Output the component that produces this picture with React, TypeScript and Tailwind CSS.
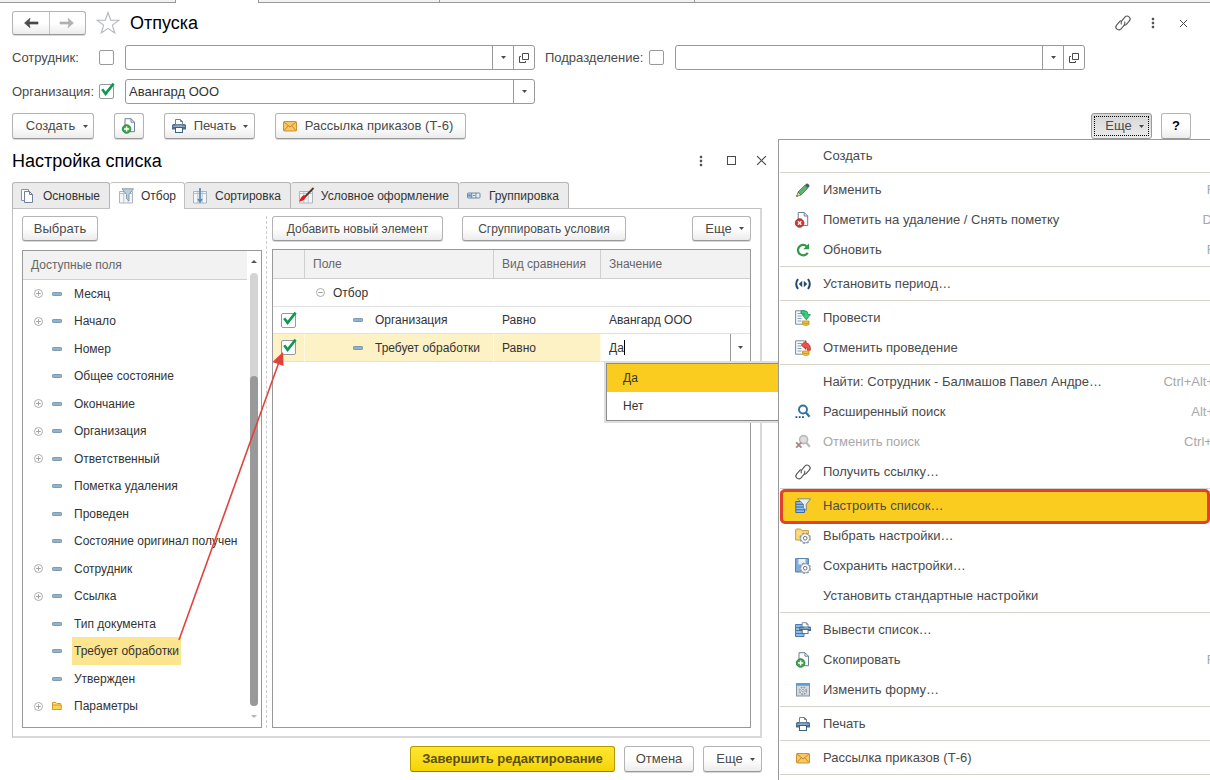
import React from "react";

type IconProps = { className?: string };
type IconComponent = (props: IconProps) => React.ReactElement;

const icon16 = "block h-4 w-4 shrink-0 overflow-visible";

/* ---------- icons ---------- */

const ArrowLeft = () => (
  <svg className="block h-3 w-4" viewBox="0 0 16 12">
    <path d="M1.5 6 L7 1.2 L6.2 4.9 H15 V7.1 H6.2 L7 10.8 Z" fill="#4a4a4a" stroke="#4a4a4a" strokeWidth=".6" />
  </svg>
);

const ArrowRight = () => (
  <svg className="block h-3 w-4" viewBox="0 0 16 12">
    <path d="M14.5 6 L9 1.2 L9.8 4.9 H1 V7.1 H9.8 L9 10.8 Z" fill="#b0b0b0" stroke="#b0b0b0" strokeWidth=".6" />
  </svg>
);

const Star = () => (
  <svg className="block h-6 w-6" viewBox="0 0 24 24">
    <path
      d="M12 1.5 L14.7 9.2 H22.8 L16.4 14.1 L18.7 22 L12 17.3 L5.3 22 L7.6 14.1 L1.2 9.2 H9.3 Z"
      fill="#fff"
      stroke="#b3b6bb"
      strokeWidth="1.1"
    />
  </svg>
);

const SmallCaret = () => (
  <svg className="block h-[3px] w-[5px] shrink-0" viewBox="0 0 5 3">
    <path d="M0 0 H5 L2.5 3 Z" fill="#4a4a4a" />
  </svg>
);

const OpenIcon = () => (
  <svg className="block h-[10px] w-[10px]" viewBox="0 0 10 10" fill="none" stroke="#4a4a4a">
    <path d="M3.5 .5 H9.5 V6.5 H3.5 Z" />
    <path d="M2 3.5 H.5 V9.5 H6.5 V8" />
  </svg>
);

const LinkIcon: IconComponent = () => (
  <svg className={icon16} viewBox="0 0 16 16" fill="none" stroke="#555" strokeWidth="1.1" strokeLinecap="round">
    <path d="M6.2 9 Q5.8 7 7 5.6 L9.9 2.2 A2.9 2.9 0 0 1 14.4 5.9 L11.4 9.4 Q10.6 10.2 9.6 10.3" />
    <path d="M9.8 7 Q10.2 9 9 10.4 L6.1 13.8 A2.9 2.9 0 0 1 1.6 10.1 L4.6 6.6 Q5.2 6 5.9 5.8" />
  </svg>
);

const DotsIcon = () => (
  <svg className="block h-3 w-1" viewBox="0 0 4 12" fill="#555">
    <rect x=".8" y=".8" width="2.4" height="2.4" rx=".6" />
    <rect x=".8" y="4.8" width="2.4" height="2.4" rx=".6" />
    <rect x=".8" y="8.8" width="2.4" height="2.4" rx=".6" />
  </svg>
);

const CrossIcon = ({ className }: IconProps) => (
  <svg className={className} viewBox="0 0 10 10" stroke="#4a4a4a" strokeWidth="1.1">
    <path d="M1 1 L9 9 M9 1 L1 9" />
  </svg>
);

const SheetShape = () => (
  <path d="M4.5 1.5 H10.5 L14 5 V14.5 H4.5 Z M10.5 1.5 V5 H14" fill="#fbfdff" stroke="#6d8196" strokeLinejoin="round" />
);

const CopyPlusIcon: IconComponent = () => (
  <svg className={icon16} viewBox="0 0 16 16">
    <g transform="translate(-.5 -.8)">
      <SheetShape />
    </g>
    <circle cx="5.6" cy="11" r="4.3" fill="#3ba54a" stroke="#1f7d30" strokeWidth=".8" />
    <path d="M5.6 8.4 V13.6 M3 11 H8.2" stroke="#fff" strokeWidth="1.5" />
  </svg>
);

const DeleteMarkIcon: IconComponent = () => (
  <svg className={icon16} viewBox="0 0 16 16">
    <g transform="translate(-1.3 -1)">
      <SheetShape />
    </g>
    <circle cx="4.6" cy="11" r="4.3" fill="#d3322f" stroke="#9d1f1f" strokeWidth=".8" />
    <path d="M2.9 9.3 L6.3 12.7 M6.3 9.3 L2.9 12.7" stroke="#fff" strokeWidth="1.4" />
  </svg>
);

const PrinterShape = () => (
  <g>
    <path d="M4.5 6.5 V1.5 H9.5 L11.5 3.5 V6.5 Z" fill="#fff" stroke="#6d8194" />
    <path d="M9.5 1.5 V3.5 H11.5" fill="none" stroke="#6d8194" />
    <path d="M2.6 6 H4.5 V7.2 H11.5 V6 H13.4 Q15 6 15 7.6 V11.4 H1 V7.6 Q1 6 2.6 6 Z" fill="#4a6f95" />
    <path d="M2.2 8.3 H13.8" stroke="#a9c2d8" strokeWidth=".9" />
    <rect x="4.5" y="9.5" width="7" height="5" fill="#fff" stroke="#3f5f7e" />
  </g>
);

const PrinterIcon: IconComponent = () => (
  <svg className={icon16} viewBox="0 0 16 16">
    <PrinterShape />
  </svg>
);

const PrintListIcon: IconComponent = () => (
  <svg className={icon16} viewBox="0 0 16 16">
    <path d="M.5 2.5 H9 V14.5 H.5 Z" fill="#8fbbe6" stroke="#4c7bab" />
    <path d="M1 5.5 H9 M1 8.5 H9 M1 11.5 H9" stroke="#4c7bab" />
    <g transform="translate(3.4 -.6) scale(.84)">
      <PrinterShape />
    </g>
  </svg>
);

const MailIcon: IconComponent = () => (
  <svg className={icon16} viewBox="0 0 16 16">
    <rect x="1.5" y="3.5" width="13" height="9.5" rx=".8" fill="#f6c866" stroke="#cf8f2e" />
    <path d="M2 4 L8 9 L14 4 M2 12.6 L6.3 7.7 M14 12.6 L9.7 7.7" fill="none" stroke="#c9872a" />
  </svg>
);

const PencilIcon: IconComponent = () => (
  <svg className={icon16} viewBox="0 0 16 16">
    <path d="M1.6 14.4 L3 10 L6 13 Z" fill="#f1cf95" stroke="#8c7343" strokeWidth=".8" />
    <path d="M3 10 L9.6 3.4 L12.6 6.4 L6 13 Z" fill="#5cb56a" stroke="#37804a" strokeWidth=".8" />
    <path d="M9.8 3.2 L11.5 1.6 Q12.3 1.2 13.2 2 L14.2 3 Q14.7 3.8 14.3 4.5 L12.8 6.2 Z" fill="#4d5963" />
    <path d="M1.3 14.7 L1.8 13 L3 14.2 Z" fill="#444" />
  </svg>
);

const RefreshIcon: IconComponent = () => (
  <svg className={icon16} viewBox="0 0 16 16">
    <path d="M12.7 10.7 A5.2 5.2 0 1 1 11.6 4.2" fill="none" stroke="#35984c" strokeWidth="2.2" />
    <path d="M14 1.4 V7.2 H8.2 Z" fill="#35984c" />
  </svg>
);

const PeriodIcon: IconComponent = () => (
  <svg className={icon16} viewBox="0 0 16 16">
    <path d="M3 3 Q-.6 8 3 13 M13 3 Q16.6 8 13 13" fill="none" stroke="#1f4c70" strokeWidth="2" />
    <path d="M7.2 4.8 V11.2 L3.8 8 Z M8.8 4.8 V11.2 L12.2 8 Z" fill="#1f4c70" />
  </svg>
);

const LedgerShape = () => (
  <g>
    <path d="M9.5 .8 H.6 V14.2 H7" fill="#f6f9fc" stroke="#788ba0" />
    <path d="M2.5 3.5 H7 M2.5 6 H6.5 M2.5 8.5 H6.5 M2.5 11 H6.5" stroke="#8d9cad" />
    <path d="M7.6 11 H14 V14.6 Q10.8 16.4 7.6 14.6 Z" fill="#f3c844" stroke="#bd8a1b" strokeWidth=".8" />
    <path d="M7.6 12.8 Q10.8 14.4 14 12.8" fill="none" stroke="#bd8a1b" strokeWidth=".8" />
  </g>
);

const PostIcon: IconComponent = () => (
  <svg className={icon16} viewBox="0 0 16 16">
    <LedgerShape />
    <path d="M6 .8 H10 Q12.9 .8 12.9 4.6 H15.4 L11.3 9.8 L7.2 4.6 H9.7 Q9.7 3.4 8.5 3.4 H6 Z" fill="#3bd07a" stroke="#12934a" strokeWidth=".8" />
  </svg>
);

const UnpostIcon: IconComponent = () => (
  <svg className={icon16} viewBox="0 0 16 16">
    <LedgerShape />
    <path d="M6.3 5 L11 .6 V3 Q15.6 3.2 15.4 10.2 H12.4 Q12.9 7.2 11 7 V9.4 Z" fill="#ee5148" stroke="#b52622" strokeWidth=".8" />
  </svg>
);

const SearchIcon: IconComponent = () => (
  <svg className={icon16} viewBox="0 0 16 16">
    <circle cx="8" cy="5.5" r="4" fill="none" stroke="#2f74a0" strokeWidth="1.9" />
    <path d="M10.8 8.6 L14.6 12.8" stroke="#2f74a0" strokeWidth="2.2" />
    <path d="M.5 12.2 H2.3 V14 H.5 Z M3.8 12.2 H5.6 V14 H3.8 Z M7.1 12.2 H8.9 V14 H7.1 Z" fill="#24516f" />
  </svg>
);

const CancelSearchIcon: IconComponent = () => (
  <svg className={icon16} viewBox="0 0 16 16">
    <circle cx="8.6" cy="5.6" r="4" fill="#dedede" stroke="#b9b9b9" strokeWidth="1.6" />
    <path d="M11.4 8.8 L14.8 12.8" stroke="#b9b9b9" strokeWidth="2.2" />
    <path d="M1.2 8.4 L6.4 13.6 M6.4 8.4 L1.2 13.6" stroke="#a98989" strokeWidth="2" />
  </svg>
);

const FilterListIcon: IconComponent = () => (
  <svg className={icon16} viewBox="0 0 16 16">
    <path d="M.8 3.5 H9.5 V14.5 H.8 Z" fill="#8cbdee" stroke="#3b6a9d" />
    <path d="M1 6.3 H9 M1 9 H9.4 M1 11.8 H9.4" stroke="#3b6a9d" />
    <path d="M2.5 .8 H15.5 L11.3 6.2 V12.4 L8.4 10 V6.2 L4.6 2.6 Z" fill="#e9edf1" stroke="#6c7f92" strokeWidth=".9" />
  </svg>
);

const GearShape = () => (
  <g>
    <circle cx="10.2" cy="10.2" r="5" fill="#f2f4f6" stroke="#8793a0" strokeWidth="1.5" strokeDasharray="2.3 1.63" />
    <circle cx="10.2" cy="10.2" r="4.5" fill="#f4f6f8" stroke="#8793a0" strokeWidth=".8" />
    <circle cx="10.2" cy="10.2" r="1.8" fill="#fff" stroke="#5d6975" strokeWidth=".9" />
  </g>
);

const FolderGearIcon: IconComponent = () => (
  <svg className={icon16} viewBox="0 0 16 16">
    <path d="M.6 12 V2 Q.6 1 1.6 1 H5.5 L6.7 2.6 H13.4 V12 Z" fill="#f9d877" stroke="#d09c3a" />
    <path d="M2 5 H13" stroke="#fbe6a6" />
    <GearShape />
  </svg>
);

const DiskGearIcon: IconComponent = () => (
  <svg className={icon16} viewBox="0 0 16 16">
    <path d="M.6 .6 H13.4 V14 H.6 Z" fill="#82b0dd" stroke="#4d7cab" />
    <rect x="3.5" y="1" width="7" height="5.4" fill="#e9f1f9" />
    <GearShape />
  </svg>
);

const FormIcon: IconComponent = () => (
  <svg className={icon16} viewBox="0 0 16 16">
    <rect x="1.5" y="1.5" width="13" height="12.5" fill="#d5dade" stroke="#85919d" />
    <rect x="1" y="1" width="14" height="2.8" fill="#5b9fd8" />
    <circle cx="8" cy="8.8" r="3.3" fill="#eef0f2" stroke="#8b97a3" strokeWidth="1.6" strokeDasharray="1.7 .9" />
    <circle cx="8" cy="8.8" r="1.3" fill="#fff" stroke="#76828e" strokeWidth=".8" />
  </svg>
);

const PagesIcon: IconComponent = () => (
  <svg className={icon16} viewBox="0 0 16 16" fill="#fff" strokeLinejoin="round">
    <path d="M1.5 1.5 H8.5 V12.5 H1.5 Z" stroke="#8593a3" />
    <path d="M4.5 3.5 H9.5 L12.5 6.5 V14.5 H4.5 Z M9.5 3.5 V6.5 H12.5" stroke="#70819a" />
  </svg>
);

const GridShape = () => (
  <g>
    <path d="M1.5 3.5 H14.5 V15 H1.5 Z" fill="#f4f7fa" stroke="#a8b5c1" />
    <path d="M1.5 5.5 H14.5 M5.8 4 V15 M10.2 4 V15" stroke="#b7c2cc" />
  </g>
);

const FunnelTabIcon: IconComponent = () => (
  <svg className={icon16} viewBox="0 0 16 16">
    <GridShape />
    <path d="M4 .8 H15.5 L11 6.5 V13 L8.5 10.8 V6.5 Z" fill="#bfcdd9" stroke="#7d92a5" strokeWidth=".9" />
  </svg>
);

const SortTabIcon: IconComponent = () => (
  <svg className={icon16} viewBox="0 0 16 16">
    <GridShape />
    <path d="M8 0 V13" stroke="#5c8cba" strokeWidth="1.8" />
    <path d="M5.2 11 H10.8 L8 15.4 Z" fill="#5c8cba" />
  </svg>
);

const BrushTabIcon: IconComponent = () => (
  <svg className={icon16} viewBox="0 0 16 16">
    <GridShape />
    <path d="M15.5 0 L6.8 9" stroke="#55372c" strokeWidth="1.8" />
    <path d="M8 8.8 L6 7 Q3 8.3 1.2 13.6 Q6.2 13.2 8 8.8 Z" fill="#e01919" />
  </svg>
);

const GroupTabIcon: IconComponent = () => (
  <svg className={icon16} viewBox="0 0 16 16">
    <rect x="1.5" y="5" width="12.5" height="5" rx=".8" fill="#e6edf3" stroke="#6c8aa6" />
    <path d="M2 5.5 H5.5 V9.5 H2 Z" fill="#90afcc" />
    <path d="M5.7 5 V10 M9.9 5 V10 M2.5 7.5 H4.5 M6.8 7.5 H8.8" stroke="#6c8aa6" />
  </svg>
);

const FieldDash = () => (
  <svg className="block h-1 w-[10px] shrink-0" viewBox="0 0 10 4">
    <rect x=".4" y=".4" width="9.2" height="3.2" rx="1" fill="#8fb4d0" stroke="#648199" strokeWidth=".8" />
  </svg>
);

const FolderSmall = () => (
  <svg className="block h-2 w-[10px] shrink-0" viewBox="0 0 10 8">
    <path d="M.5 7.5 V.5 H4 L5 1.5 H8.7 V3" fill="#ffe28a" stroke="#d39a25" />
    <path d="M.5 7.5 V3 H9.3 V7.5 Z" fill="#ffd24f" stroke="#d39a25" />
  </svg>
);

const ExpandIcon = ({ open }: { open?: boolean }) => (
  <svg className="block h-[9px] w-[9px] shrink-0" viewBox="0 0 9 9" fill="none" stroke="#a3a3a3">
    <circle cx="4.5" cy="4.5" r="4" fill="#fff" strokeWidth=".9" />
    <path d={open ? "M2.2 4.5 H6.8" : "M2.2 4.5 H6.8 M4.5 2.2 V6.8"} />
  </svg>
);

/* ---------- controls ---------- */

const buttonBase =
  "flex shrink-0 items-center justify-center whitespace-nowrap rounded-[3px] border border-[#b4b4b4] border-b-[#999] bg-linear-to-b from-white from-50% to-[#ececec] shadow-[0_1px_0_#d8d8d8]";

function Button({ children, className = "", label }: { children: React.ReactNode; className?: string; label?: string }) {
  return (
    <button type="button" aria-label={label} className={`${buttonBase} ${className}`}>
      {children}
    </button>
  );
}

function Checkbox({ id, checked, label }: { id: string; checked?: boolean; label?: string }) {
  return (
    <span className="relative block h-[15px] w-[15px] shrink-0">
      <input
        id={id}
        type="checkbox"
        aria-label={label}
        defaultChecked={checked}
        className="peer block h-[15px] w-[15px] appearance-none rounded-xs border border-[#999] bg-white"
      />
      <svg
        className="pointer-events-none absolute inset-0 hidden h-[15px] w-[15px] overflow-visible peer-checked:block"
        viewBox="0 0 15 15"
      >
        <path d="M3.2 5.2 L6.6 9.8 L14.6 -.4" fill="none" stroke="#0f9950" strokeWidth="2.6" />
      </svg>
    </span>
  );
}

function ComboField({ id, value = "", openable, className = "" }: { id: string; value?: string; openable?: boolean; className?: string }) {
  return (
    <div className={`flex h-[25px] min-w-0 rounded-[3px] border border-[#999] bg-white ${className}`}>
      <input id={id} type="text" defaultValue={value} className="min-w-0 flex-1 bg-transparent px-[3px] text-[#333] outline-none" />
      <button type="button" aria-label="Выбрать из списка" className="flex w-[21px] items-center justify-center border-l border-[#999]">
        <SmallCaret />
      </button>
      {openable && (
        <button type="button" aria-label="Открыть" className="flex w-[21px] items-center justify-center border-l border-[#999]">
          <OpenIcon />
        </button>
      )}
    </div>
  );
}

/* ---------- data ---------- */

const fields: { name: string; expandable?: boolean; folder?: boolean; marked?: boolean }[] = [
  { name: "Месяц", expandable: true },
  { name: "Начало", expandable: true },
  { name: "Номер" },
  { name: "Общее состояние" },
  { name: "Окончание", expandable: true },
  { name: "Организация", expandable: true },
  { name: "Ответственный", expandable: true },
  { name: "Пометка удаления" },
  { name: "Проведен" },
  { name: "Состояние оригинал получен" },
  { name: "Сотрудник", expandable: true },
  { name: "Ссылка", expandable: true },
  { name: "Тип документа" },
  { name: "Требует обработки", marked: true },
  { name: "Утвержден" },
  { name: "Параметры", expandable: true, folder: true },
];

type MenuEntry = { label: string; icon?: IconComponent; keys?: string; disabled?: boolean; active?: boolean };

const menuGroups: MenuEntry[][] = [
  [{ label: "Создать" }],
  [
    { label: "Изменить", icon: PencilIcon, keys: "F2" },
    { label: "Пометить на удаление / Снять пометку", icon: DeleteMarkIcon, keys: "Del" },
    { label: "Обновить", icon: RefreshIcon, keys: "F5" },
  ],
  [{ label: "Установить период…", icon: PeriodIcon }],
  [
    { label: "Провести", icon: PostIcon },
    { label: "Отменить проведение", icon: UnpostIcon },
  ],
  [
    { label: "Найти: Сотрудник - Балмашов Павел Андре…", keys: "Ctrl+Alt+F" },
    { label: "Расширенный поиск", icon: SearchIcon, keys: "Alt+F" },
    { label: "Отменить поиск", icon: CancelSearchIcon, keys: "Ctrl+Q", disabled: true },
    { label: "Получить ссылку…", icon: LinkIcon },
  ],
  [
    { label: "Настроить список…", icon: FilterListIcon, active: true },
    { label: "Выбрать настройки…", icon: FolderGearIcon },
    { label: "Сохранить настройки…", icon: DiskGearIcon },
    { label: "Установить стандартные настройки" },
  ],
  [
    { label: "Вывести список…", icon: PrintListIcon },
    { label: "Скопировать", icon: CopyPlusIcon, keys: "F9" },
    { label: "Изменить форму…", icon: FormIcon },
  ],
  [{ label: "Печать", icon: PrinterIcon }],
  [{ label: "Рассылка приказов (Т-6)", icon: MailIcon }],
];

const tabs: { label: string; icon: IconComponent; active?: boolean }[] = [
  { label: "Основные", icon: PagesIcon },
  { label: "Отбор", icon: FunnelTabIcon, active: true },
  { label: "Сортировка", icon: SortTabIcon },
  { label: "Условное оформление", icon: BrushTabIcon },
  { label: "Группировка", icon: GroupTabIcon },
];

/* ---------- sections ---------- */

function WindowTabs() {
  const edge = "border-r border-b border-[#999] bg-[#f2f2f2]";
  return (
    <div className="flex h-[3px]">
      <div className={`w-44 ${edge}`} />
      <div className="w-[83px] border-r border-[#999] bg-white" />
      <div className={`w-[181px] ${edge}`} />
      <div className={`w-[255px] ${edge}`} />
      <div className="flex-1 border-b border-[#999] bg-[#f2f2f2]" />
    </div>
  );
}

function Header() {
  return (
    <header className="flex h-6 items-center">
      <div className="flex h-6 w-[74px] rounded-[3px] border border-[#b4b4b4] border-b-[#999] bg-linear-to-b from-white from-50% to-[#ececec] shadow-[0_1px_0_#d8d8d8]">
        <button type="button" aria-label="Назад" className="flex flex-1 items-center justify-center border-r border-[#c4c4c4]">
          <ArrowLeft />
        </button>
        <button type="button" aria-label="Вперед" className="flex flex-1 items-center justify-center">
          <ArrowRight />
        </button>
      </div>
      <button type="button" aria-label="В избранное" className="ml-[10px]">
        <Star />
      </button>
      <h1 className="ml-[10px] text-[18px] text-black">Отпуска</h1>
      <div className="mr-[10px] ml-auto flex items-center gap-5">
        <button type="button" aria-label="Получить ссылку">
          <LinkIcon />
        </button>
        <button type="button" aria-label="Меню">
          <DotsIcon />
        </button>
        <button type="button" aria-label="Закрыть" className="ml-1">
          <CrossIcon className="block h-[9px] w-[9px]" />
        </button>
      </div>
    </header>
  );
}

function Filters() {
  return (
    <div className="mt-[10px] grid grid-cols-[523px_540px] gap-x-[10px] gap-y-[9px]">
      <div className="flex items-center">
        <label htmlFor="employee" className="w-[87px]">Сотрудник:</label>
        <Checkbox id="employee-on" label="Отбор по сотруднику" />
        <ComboField id="employee" openable className="ml-[11px] flex-1" />
      </div>
      <div className="flex items-center">
        <label htmlFor="department" className="w-[104px]">Подразделение:</label>
        <Checkbox id="department-on" label="Отбор по подразделению" />
        <ComboField id="department" openable className="ml-[11px] flex-1" />
      </div>
      <div className="flex items-center">
        <label htmlFor="company" className="w-[87px]">Организация:</label>
        <Checkbox id="company-on" label="Отбор по организации" checked />
        <ComboField id="company" value="Авангард ООО" className="ml-[11px] flex-1" />
      </div>
    </div>
  );
}

function Toolbar() {
  return (
    <div className="mt-[9px] flex">
      <Button className="h-[26px] w-[82px] gap-2 pl-2">
        Создать <SmallCaret />
      </Button>
      <Button label="Скопировать" className="ml-5 h-[26px] w-[30px]">
        <CopyPlusIcon />
      </Button>
      <Button className="ml-5 h-[26px] w-[91px] gap-[7px]">
        <PrinterIcon /> Печать <SmallCaret />
      </Button>
      <Button className="ml-5 h-[26px] w-[191px] gap-[7px] pr-[6px]">
        <MailIcon /> Рассылка приказов (Т-6)
      </Button>
      <button
        type="button"
        className="ml-auto h-[26px] w-[61px] rounded-[3px] border border-[#999] bg-linear-to-b from-[#d6d6d6] to-[#ececec] p-[2px]"
      >
        <span className="flex h-full items-center justify-center gap-[7px] border border-dotted border-black pl-[6px]">
          Еще <SmallCaret />
        </span>
      </button>
      <Button className="mr-[7px] ml-[9px] h-[26px] w-[30px] font-bold text-black">?</Button>
    </div>
  );
}

function FieldTree() {
  return (
    <div className="flex w-60 flex-1 border border-[#999]">
      <div className="min-w-0 flex-1">
        <div className="flex h-[29px] items-center border-b border-[#d0d0d0] bg-[#f2f2f2] pl-2 text-[#666]">Доступные поля</div>
        <ul className="grid h-[440px] auto-rows-fr">
          {fields.map((f) => (
            <li key={f.name} className="flex items-center whitespace-nowrap text-[#333]">
              <span className="ml-[11px] flex w-[18px]">{f.expandable && <ExpandIcon />}</span>
              {f.folder ? <FolderSmall /> : <FieldDash />}
              <span className={f.marked ? "ml-[10px] flex h-7 items-center bg-[#fde58f] px-[2px]" : "ml-[10px] px-[2px]"}>
                {f.name}
              </span>
            </li>
          ))}
        </ul>
      </div>
      <div className="flex w-[14px] flex-col items-center pt-[9px] pb-[9px]">
        <svg className="block h-[3px] w-[6px]" viewBox="0 0 6 3">
          <path d="M0 3 H6 L3 0 Z" fill="#555" />
        </svg>
        <div className="mt-[10px] flex w-2 flex-1 flex-col justify-end rounded-full bg-[#d4d4d4]">
          <div className="h-[330px] rounded-full bg-[#999]" />
        </div>
        <svg className="mt-[9px] block h-[3px] w-[6px]" viewBox="0 0 6 3">
          <path d="M0 0 H6 L3 3 Z" fill="#b5b5b5" />
        </svg>
      </div>
    </div>
  );
}

function ConditionTable() {
  const head = "border-r border-[#cfcfcf] px-2 text-left font-normal last:border-r-0";
  const picked = "border-r border-[#fff9e3] bg-[#fdf1c6]";
  return (
    <div className="relative flex-1 border border-[#999]">
      <table className="w-full table-fixed border-separate border-spacing-0 whitespace-nowrap text-[#333]">
        <colgroup>
          <col className="w-8" />
          <col className="w-[189px]" />
          <col className="w-[107px]" />
          <col />
        </colgroup>
        <thead>
          <tr className="h-[29px] bg-[#f2f2f2] text-[#666] [&>th]:border-b [&>th]:border-b-[#cfcfcf]">
            <th className={head} aria-label="Использование" />
            <th className={head}>Поле</th>
            <th className={head}>Вид сравнения</th>
            <th className={head}>Значение</th>
          </tr>
        </thead>
        <tbody>
          <tr className="h-7 [&>td]:border-b [&>td]:border-b-[#e2e2e2]">
            <td />
            <td colSpan={3}>
              <span className="flex items-center gap-2 pl-[11px]">
                <ExpandIcon open /> Отбор
              </span>
            </td>
          </tr>
          <tr className="h-[27px] [&>td]:border-b [&>td]:border-b-[#e2e2e2]">
            <td className="pl-2">
              <Checkbox id="cond-company" label="Организация" checked />
            </td>
            <td>
              <span className="flex items-center gap-3 pl-12">
                <FieldDash /> Организация
              </span>
            </td>
            <td className="px-2">Равно</td>
            <td className="px-2">Авангард ООО</td>
          </tr>
          <tr className="h-7 [&>td]:border-b [&>td]:border-b-[#e2e2e2]">
            <td className={`pl-2 ${picked}`}>
              <Checkbox id="cond-processing" label="Требует обработки" checked />
            </td>
            <td className={picked}>
              <span className="flex items-center gap-3 pl-12">
                <FieldDash /> Требует обработки
              </span>
            </td>
            <td className={`px-2 ${picked}`}>Равно</td>
            <td className="p-0">
              <span className="flex h-[27px] items-center pl-2">
                <input aria-label="Значение" defaultValue="Да" className="[field-sizing:content] outline-none" />
                <span className="h-[15px] w-px bg-black" />
                <button
                  type="button"
                  aria-label="Выбрать значение"
                  className="ml-auto flex h-full w-5 items-center justify-center border-l border-[#999]"
                >
                  <SmallCaret />
                </button>
              </span>
            </td>
          </tr>
        </tbody>
      </table>
      <ul
        role="listbox"
        aria-label="Значение"
        className="absolute top-[113px] left-[333px] z-10 w-[180px] border border-[#8c8c8c] bg-white text-[#333] shadow-[0_0_0_2px_#dedede]"
      >
        <li role="option" aria-selected="true" className="flex h-7 items-center bg-[#facc20] pl-4">Да</li>
        <li role="option" aria-selected="false" className="flex h-7 items-center pl-4">Нет</li>
      </ul>
    </div>
  );
}

function ListSettings() {
  return (
    <section className="relative flex min-w-0 flex-1 flex-col overflow-hidden pr-4 pb-2 pl-3">
      <div className="flex h-[43px] items-center">
        <h2 className="text-[18px] text-black">Настройка списка</h2>
        <div className="mr-[-14px] ml-auto flex items-center">
          <button type="button" aria-label="Меню" className="flex w-[30px] justify-center">
            <DotsIcon />
          </button>
          <button type="button" aria-label="Развернуть" className="flex w-[30px] justify-center">
            <span className="block h-[9px] w-[9px] border border-[#4a4a4a]" />
          </button>
          <button type="button" aria-label="Закрыть" className="flex w-[30px] justify-center">
            <CrossIcon className="block h-[11px] w-[11px]" />
          </button>
        </div>
      </div>

      <div role="tablist" className="relative z-10 flex text-[12px]">
        {tabs.map(({ label, icon: Icon, active }) => (
          <button
            key={label}
            type="button"
            role="tab"
            aria-selected={!!active}
            className={
              active
                ? "-mb-px flex h-[27px] items-center gap-[7px] whitespace-nowrap rounded-t-[3px] border border-l-0 border-b-0 border-[#c0c0c0] bg-white px-2 pb-px text-[#333]"
                : "flex h-[26px] items-center gap-[7px] whitespace-nowrap rounded-t-[3px] border border-l-0 border-b-0 border-[#b5b5b5] bg-[#ebebeb] pr-[9px] pl-[7px] text-[#333] first:border-l"
            }
          >
            <Icon /> {label}
          </button>
        ))}
      </div>

      <div className="flex flex-1 border border-r-2 border-b-2 border-[#c0c0c0] border-r-[#d8d8d8] border-b-[#d8d8d8] px-[9px] pt-[7px] pb-2">
        <div className="flex flex-col">
          <Button className="h-[25px] w-[76px] self-start">Выбрать</Button>
          <div className="mt-[9px] flex flex-1 text-[12px]">
            <FieldTree />
          </div>
        </div>
        <div className="mx-1 w-px border-l border-dashed border-[#ccc]" />
        <div className="ml-px flex min-w-0 flex-1 flex-col">
          <div className="flex">
            <Button className="h-[25px] w-[171px] text-[12px]">Добавить новый элемент</Button>
            <Button className="ml-[19px] h-[25px] w-[164px] text-[12px]">Сгруппировать условия</Button>
            <Button className="ml-auto h-[25px] w-[59px] gap-[7px] pl-[6px]">
              Еще <SmallCaret />
            </Button>
          </div>
          <div className="mt-2 flex flex-1 text-[12px]">
            <ConditionTable />
          </div>
        </div>
      </div>

      <footer className="mt-2 flex justify-end gap-[9px]">
        <button
          type="button"
          className="h-[26px] w-[205px] rounded-[3px] border border-[#b39b00] border-b-[#8f7c00] bg-linear-to-b from-[#ffe62e] to-[#f5d400] font-bold text-[#5a4f10]"
        >
          Завершить редактирование
        </button>
        <Button className="h-[26px] w-[70px]">Отмена</Button>
        <Button className="h-[26px] w-[59px] gap-[7px] pl-[6px]">
          Еще <SmallCaret />
        </Button>
      </footer>

      <svg className="pointer-events-none absolute top-[211px] left-[178px] z-20 h-[292px] w-28" viewBox="0 0 112 292">
        <path d="M1 290 L101 12" stroke="#e0433a" strokeWidth="1.6" />
        <path d="M105 2 L105.6 16 L94.4 12 Z" fill="#e0433a" />
      </svg>
    </section>
  );
}

function MoreMenu() {
  return (
    <nav aria-label="Еще" className="w-[432px] shrink-0 overflow-hidden border-t border-l border-[#999] bg-white pt-px">
      {menuGroups.map((group, i) => (
        <div key={i} className="ml-px border-b border-[#d6d3c8] pb-px [&+div]:pt-[2px]">
          {group.map(({ label, icon: Icon, keys, disabled, active }) => (
            <div key={label} className={active ? "relative bg-[#facc20]" : "relative"}>
              <button
                type="button"
                disabled={disabled}
                className={
                  disabled
                    ? "flex h-[30px] w-[442px] items-center whitespace-nowrap pl-[15px] text-left text-[#a8a8a8]"
                    : "flex h-[30px] w-[442px] items-center whitespace-nowrap pl-[15px] text-left"
                }
              >
                <span className="w-[28px]">{Icon && <Icon />}</span>
                {label}
                {keys && <span className="ml-auto text-[#a8a8a8]">{keys}</span>}
              </button>
              {active && (
                <span className="pointer-events-none absolute -top-[2px] right-0 -bottom-[3px] left-0 rounded-[5px] border-3 border-[#e0402c]" />
              )}
            </div>
          ))}
        </div>
      ))}
    </nav>
  );
}

export default function App() {
  return (
    <div className="flex min-h-screen flex-col overflow-x-hidden bg-white font-['Liberation_Sans',Arial,sans-serif] text-[13px] leading-4 text-[#4a4a4a]">
      <WindowTabs />
      <div className="px-3 pt-2">
        <Header />
        <Filters />
        <Toolbar />
      </div>
      <div className="flex flex-1">
        <ListSettings />
        <MoreMenu />
      </div>
    </div>
  );
}
